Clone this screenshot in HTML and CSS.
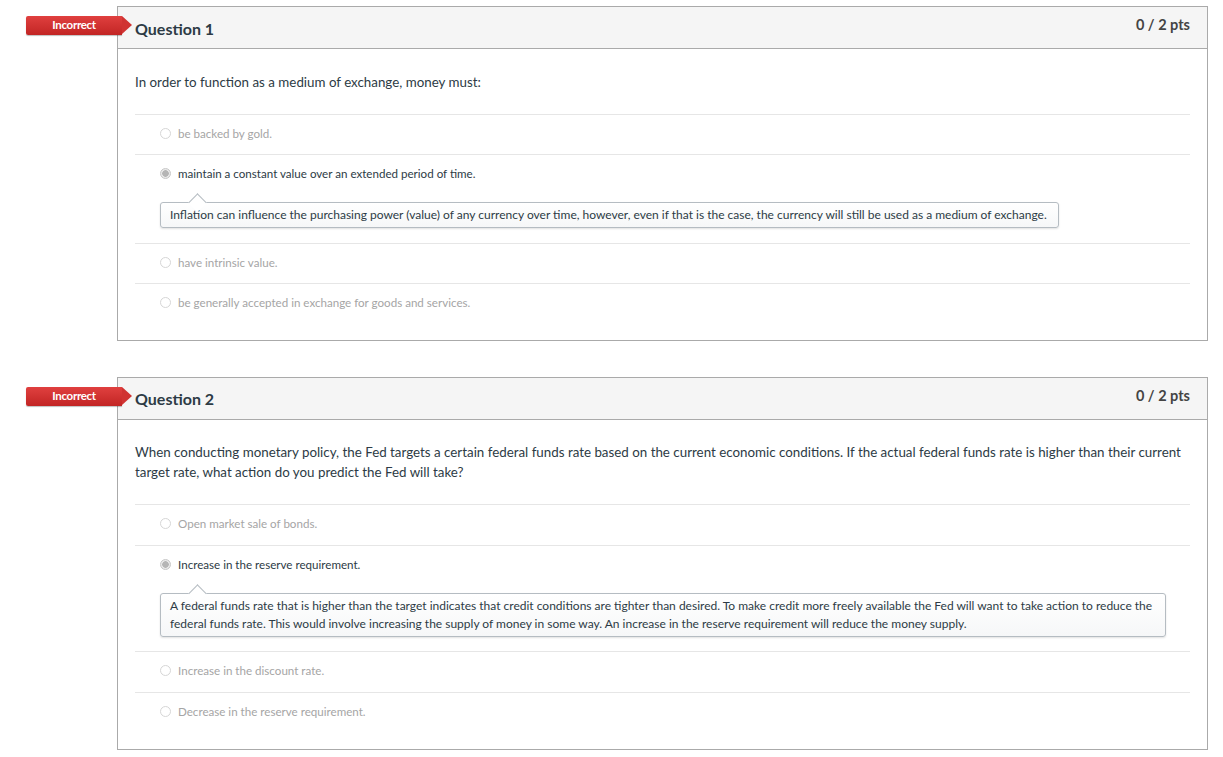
FILE: index.html
```html
<!DOCTYPE html>
<html>
<head>
<meta charset="utf-8">
<link rel="stylesheet" href="styles.css">
</head>
<body>
<div class="quiz">
  <div class="question">
    <div class="badge">Incorrect</div>
    <div class="q-header">
      <span class="q-title">Question 1</span>
      <span class="q-pts">0 / 2 pts</span>
    </div>
    <div class="q-body">
      <p class="q-text">In order to function as a medium of exchange, money must:</p>
      <div class="answers">
        <div class="answer"><span class="radio"></span><span class="a-text">be backed by gold.</span></div>
        <div class="answer selected"><span class="radio"></span><span class="a-text">maintain a constant value over an extended period of time.</span>
          <div class="comment">Inflation can influence the purchasing power (value) of any currency over time, however, even if that is the case, the currency will still be used as a medium of exchange.</div>
        </div>
        <div class="answer"><span class="radio"></span><span class="a-text">have intrinsic value.</span></div>
        <div class="answer"><span class="radio"></span><span class="a-text">be generally accepted in exchange for goods and services.</span></div>
      </div>
    </div>
  </div>

  <div class="question q2">
    <div class="badge">Incorrect</div>
    <div class="q-header">
      <span class="q-title">Question 2</span>
      <span class="q-pts">0 / 2 pts</span>
    </div>
    <div class="q-body">
      <p class="q-text">When conducting monetary policy, the Fed targets a certain federal funds rate based on the current economic conditions. If the actual federal funds rate is higher than their current target rate, what action do you predict the Fed will take?</p>
      <div class="answers">
        <div class="answer"><span class="radio"></span><span class="a-text">Open market sale of bonds.</span></div>
        <div class="answer selected"><span class="radio"></span><span class="a-text">Increase in the reserve requirement.</span>
          <div class="comment wide">A federal funds rate that is higher than the target indicates that credit conditions are tighter than desired. To make credit more freely available the Fed will want to take action to reduce the federal funds rate. This would involve increasing the supply of money in some way. An increase in the reserve requirement will reduce the money supply.</div>
        </div>
        <div class="answer"><span class="radio"></span><span class="a-text">Increase in the discount rate.</span></div>
        <div class="answer"><span class="radio"></span><span class="a-text">Decrease in the reserve requirement.</span></div>
      </div>
    </div>
  </div>
</div>
</body>
</html>
```

FILE: styles.css
```css
* { box-sizing: border-box; }
body {
  margin: 0;
  background: #fff;
  font-family: Lato, "Open Sans", sans-serif;
  color: #2d3b45;
}
.quiz {
  padding: 6px 16px 0 117px;
  display: flex;
  flex-direction: column;
  gap: 36px;
}
.question {
  position: relative;
  border: 1px solid #aaaaaa;
  width: 1091px;
}
.badge {
  position: absolute;
  left: -92px;
  top: 9px;
  width: 96px;
  height: 19px;
  background: linear-gradient(#e0403f, #c22524);
  color: #fff;
  font-weight: 700;
  font-size: 11.5px;
  line-height: 18px;
  text-align: center;
  letter-spacing: -0.3px;
  border-radius: 2px 0 0 2px;
  box-shadow: 0 1px 1px rgba(0,0,0,0.25);
}
.badge::after {
  content: "";
  position: absolute;
  right: -10px;
  top: 0;
  border-left: 10px solid #d03332;
  border-top: 9.5px solid transparent;
  border-bottom: 9.5px solid transparent;
}
.q-header {
  height: 42px;
  background: #f5f5f5;
  border-bottom: 1px solid #aaaaaa;
  display: flex;
  justify-content: space-between;
  align-items: flex-start;
  padding: 11px 17px 0 17px;
}
.q2 .q-header { padding-top: 10px; }
.q-title {
  font-size: 16px;
  font-weight: 700;
  line-height: 22px;
  color: #2d3b45;
}
.q-pts {
  font-size: 14.5px;
  font-weight: 700;
  line-height: 16px;
  margin-top: -1px;
  color: #444;
}
.q2 .q-pts { margin-top: 0; }
.q-body {
  padding: 23px 17px 17px 17px;
}
.q2 .q-body { padding-top: 22px; padding-bottom: 16px; }
.q-text {
  margin: 0 0 22px;
  font-size: 13.35px;
  line-height: 20px;
  color: #2d3b45;
}
.answer {
  border-top: 1px solid #e6e6e6;
  padding: 11px 0 13px 25px;
  font-size: 11.6px;
  line-height: 15px;
  color: #a5a5a5;
}
.q2 .answer { padding-bottom: 14px; }
.answer .radio {
  display: inline-block;
  width: 11px;
  height: 11px;
  border: 1px solid #d6d6d6;
  border-radius: 50%;
  vertical-align: -1px;
  margin-right: 7px;
  background: #fff;
}
.answer.selected { color: #2d3b45; padding-bottom: 15px; }
.q2 .answer.selected { padding-bottom: 14px; }
.answer.selected .radio {
  border-color: #c7c7c7;
  background: radial-gradient(circle, #b5b5b5 0 3px, #e9e9e9 3.5px);
}
.comment {
  position: relative;
  margin-top: 21px;
  width: fit-content;
  border: 1px solid #b5bcc2;
  border-radius: 3px;
  padding: 3px 11px 3px 9px;
  font-size: 12px;
  line-height: 18px;
  color: #2d3b45;
  background: linear-gradient(#fff, #f6f7f8);
  box-shadow: 0 1px 2px rgba(0,0,0,0.12);
}
.comment.wide { width: 1006px; }
.comment::before {
  content: "";
  position: absolute;
  left: 30px;
  top: -7px;
  width: 12px;
  height: 12px;
  background: #fff;
  border-left: 1px solid #b5bcc2;
  border-top: 1px solid #b5bcc2;
  transform: rotate(45deg);
}
```
